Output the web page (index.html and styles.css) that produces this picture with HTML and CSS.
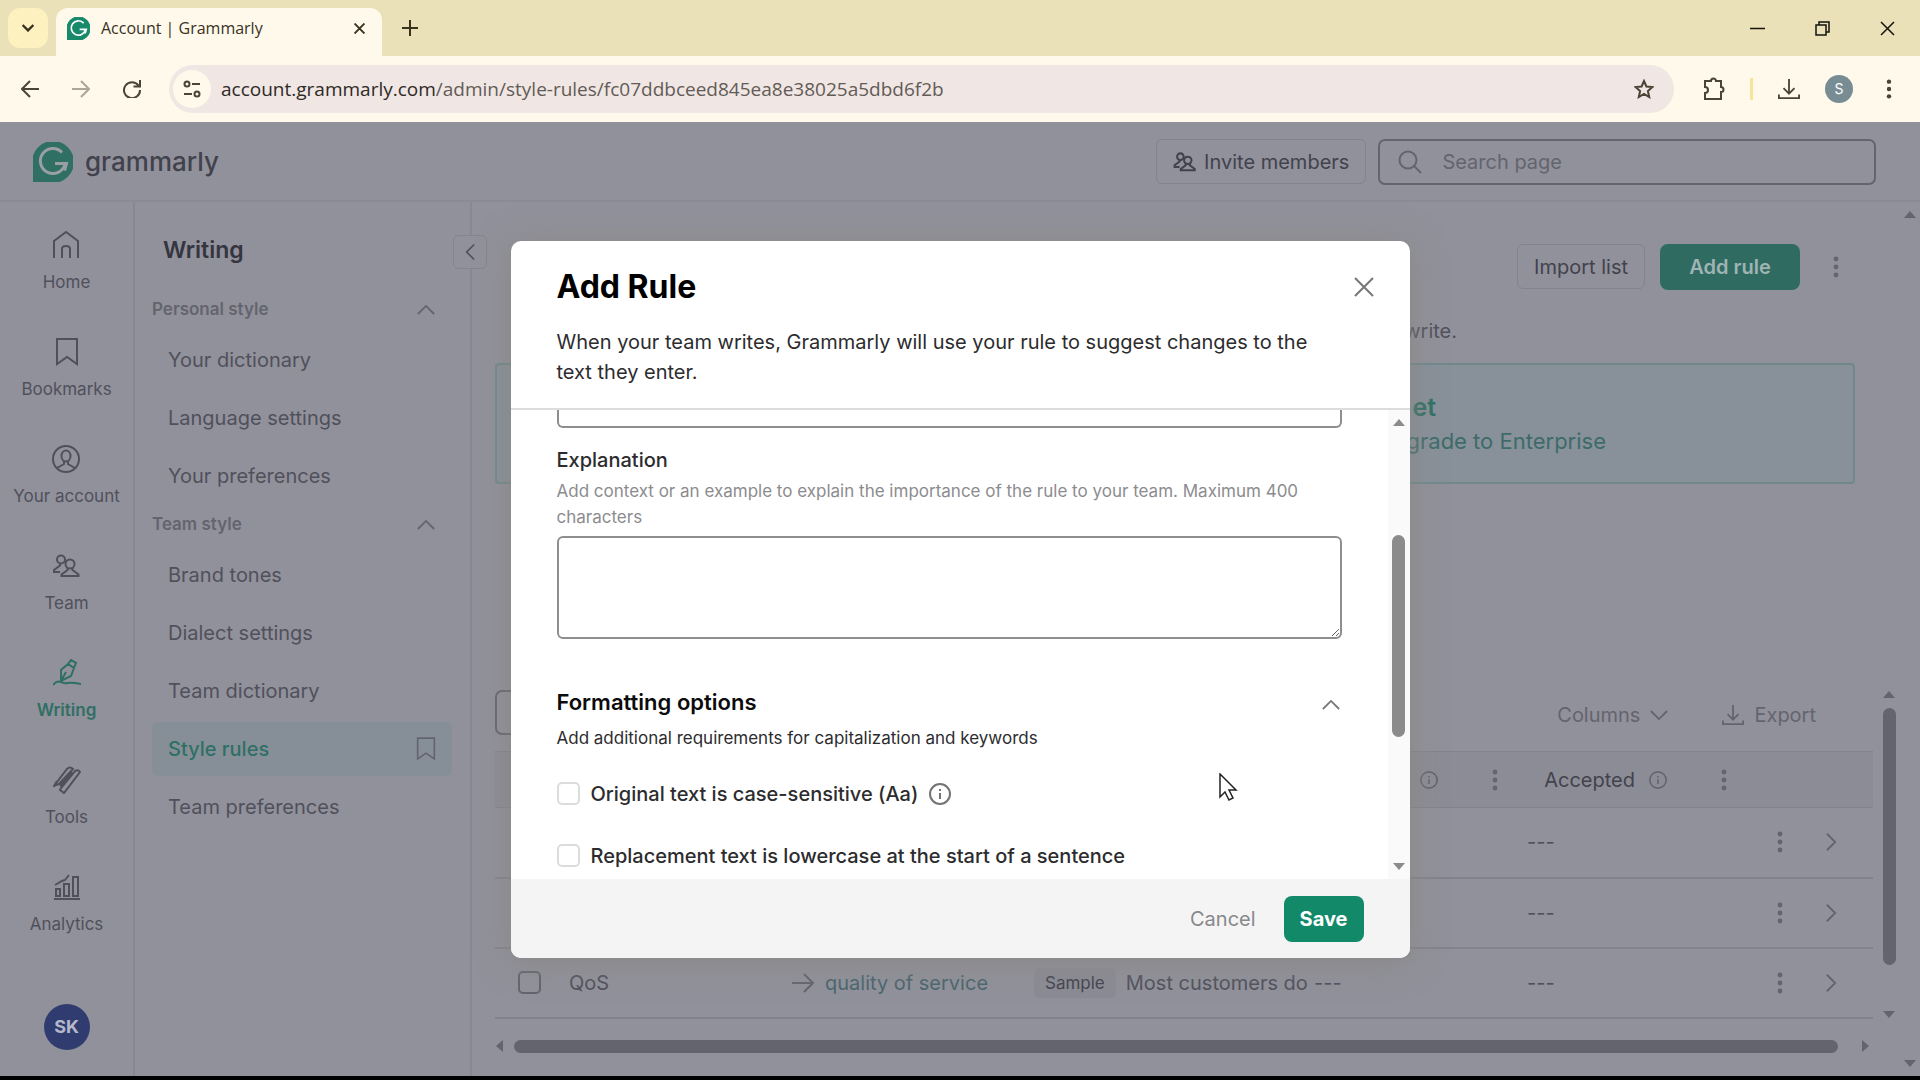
FILE: index.html
```
<!DOCTYPE html>
<html lang="en">
  <head>
    <meta charset="UTF-8" />
    <meta name="viewport" content="width=device-width, initial-scale=1.0" />
    <title>Account | Grammarly</title>
    <link rel="stylesheet" href="styles.css">
  </head>
  <body>
    <!-- Shared icons -->
    <svg class="sprite" aria-hidden="true">
      <symbol id="i-logo" viewBox="0 0 40 40">
        <path d="M20 0a20 20 0 1 1 0 40H0V20A20 20 0 0 1 20 0z" fill="currentColor"/>
        <path d="M29 10.500A12.5 12.5 0 1 0 32 22M22 21.500h11.500l-2 7" fill="none" stroke="var(--mark)" stroke-width="3"/>
      </symbol>
      <symbol id="i-up" viewBox="0 0 20 12"><path d="M1 11l9-9 9 9"/></symbol>
      <symbol id="i-down" viewBox="0 0 20 12"><path d="M1 1l9 9 9-9"/></symbol>
      <symbol id="i-right" viewBox="0 0 12 20"><path d="M1 1l9 9-9 9"/></symbol>
      <symbol id="i-left" viewBox="0 0 12 20"><path d="M11 1l-9 9 9 9"/></symbol>
      <symbol id="i-close" viewBox="0 0 20 20"><path d="M1 1l18 18M19 1L1 19"/></symbol>
      <symbol id="i-dots" viewBox="0 0 8 24"><g fill="currentColor" stroke="none"><circle cx="4" cy="4" r="2.400"/><circle cx="4" cy="12" r="2.400"/><circle cx="4" cy="20" r="2.400"/></g></symbol>
      <symbol id="i-info" viewBox="0 0 22 22"><circle cx="11" cy="11" r="10"/><path d="M11 10v6M11 6v2"/></symbol>
      <symbol id="i-bookmark" viewBox="0 0 24 28"><path d="M2 1h20v25l-10-7-10 7z"/></symbol>
      <symbol id="i-team" viewBox="0 0 28 24">
        <circle cx="9" cy="5.500" r="4"/><path d="M8 9.500v2l-6 4.500v2h6"/>
        <circle cx="18" cy="10" r="4.500"/><path d="M15.500 14v2l-6 4.500V22h17v-1.500l-6-4.500v-2"/>
      </symbol>
      <symbol id="i-download" viewBox="0 0 24 24"><path d="M12 1v15M6 11l6 6 6-6M1 18v4h22v-4"/></symbol>
      <symbol id="t-up" viewBox="0 0 12 8"><path d="M0 8l6-7 6 7z" fill="currentColor" stroke="none"/></symbol>
      <symbol id="t-down" viewBox="0 0 12 8"><path d="M0 0l6 7 6-7z" fill="currentColor" stroke="none"/></symbol>
      <symbol id="t-left" viewBox="0 0 8 12"><path d="M8 0L1 6l7 6z" fill="currentColor" stroke="none"/></symbol>
      <symbol id="t-right" viewBox="0 0 8 12"><path d="M0 0l7 6-7 6z" fill="currentColor" stroke="none"/></symbol>
    </svg>

    <div class="browser">
      <header class="tabstrip">
        <button class="tab-search" type="button" aria-label="Search tabs"><svg width="12" height="8" class="bold"><use href="#i-down"/></svg></button>
        <div class="tab">
          <svg class="favicon" width="23" height="23"><use href="#i-logo"/></svg>
          <span class="tab-title">Account | Grammarly</span>
          <button type="button" aria-label="Close tab"><svg width="11" height="11" class="bold"><use href="#i-close"/></svg></button>
        </div>
        <button class="new-tab" type="button" aria-label="New tab"><svg width="16" height="16" viewBox="0 0 16 16"><path d="M8 0v16M0 8h16"/></svg></button>
        <div class="window-controls">
          <button type="button" aria-label="Minimize"><svg width="15" height="15" viewBox="0 0 15 15"><path d="M0 7.500h15"/></svg></button>
          <button type="button" aria-label="Restore"><svg width="15" height="15" viewBox="0 0 15 15"><path d="M1 4h10v10H1zM4 4V1h10v10h-3"/></svg></button>
          <button type="button" aria-label="Close"><svg width="15" height="15" viewBox="0 0 15 15"><path d="M1 1l13 13M14 1L1 14"/></svg></button>
        </div>
      </header>

      <div class="toolbar">
        <div class="nav-buttons">
          <button type="button" aria-label="Back"><svg width="18" height="18" viewBox="0 0 18 18"><path d="M18 9H2M9 1L1 9l8 8"/></svg></button>
          <button type="button" aria-label="Forward" class="off"><svg width="18" height="18" viewBox="0 0 18 18"><path d="M0 9h16M9 1l8 8-8 8"/></svg></button>
          <button type="button" aria-label="Reload"><svg width="18" height="18" viewBox="0 0 18 18"><path d="M15.500 5.500A8 8 0 1 0 17 10M17 0v6.500h-6.500"/></svg></button>
        </div>
        <div class="address">
          <button class="site-info" type="button" aria-label="Site information">
            <svg width="18" height="18" viewBox="0 0 18 18"><circle cx="4" cy="4" r="2.500"/><path d="M9 4h8M1 14h8"/><circle cx="14" cy="14" r="2.500"/></svg>
          </button>
          <span class="url">account.grammarly.com<i>/admin/style-rules/fc07ddbceed845ea8e38025a5dbd6f2b</i></span>
          <button type="button" aria-label="Bookmark this tab"><svg width="20" height="20" viewBox="0 0 20 20"><path d="M10 2l2.400 5.500 6 .5-4.500 4 1.300 6-5.200-3.200L4.800 18l1.300-6-4.500-4 6-.5z"/></svg></button>
        </div>
        <div class="toolbar-right">
          <button type="button" aria-label="Extensions"><svg width="22" height="24" viewBox="0 0 22 24"><path d="M2 4h6a2.500 2.500 0 0 1 5 0h5v6a2.500 2.500 0 0 1 0 5v7H2v-6a3 3 0 0 0 0-6z"/></svg></button>
          <span class="divider"></span>
          <button type="button" aria-label="Downloads"><svg width="22" height="22"><use href="#i-download"/></svg></button>
          <span class="profile">S</span>
          <button type="button" aria-label="Menu"><svg width="8" height="22"><use href="#i-dots"/></svg></button>
        </div>
      </div>

      <div class="page">
        <header class="app-header">
          <a class="brand" href="#"><svg width="40" height="40"><use href="#i-logo"/></svg><span>grammarly</span></a>
          <button class="outline" type="button"><svg width="23" height="20" class="bold"><use href="#i-team"/></svg>Invite members</button>
          <label class="search">
            <svg width="24" height="24" viewBox="0 0 24 24"><circle cx="10" cy="10" r="8.500"/><path d="M16 16l7 7"/></svg>
            <input type="search" placeholder="Search page" aria-label="Search page">
          </label>
        </header>

        <div class="app-body">
          <nav class="rail">
            <a href="#"><svg width="28" height="28" viewBox="0 0 28 28"><path d="M2 27V10L14 1l12 9v17M10 27V18q0-3 4-3t4 3v9"/></svg>Home</a>
            <a href="#"><svg width="28" height="28"><use href="#i-bookmark"/></svg>Bookmarks</a>
            <a href="#"><svg width="28" height="28" viewBox="0 0 28 28"><circle cx="14" cy="14" r="13"/><ellipse cx="14" cy="11" rx="4.500" ry="5.500"/><path d="M12 16v3l-7 4M16 16v3l7 4"/></svg>Your account</a>
            <a href="#"><svg width="28" height="28"><use href="#i-team"/></svg>Team</a>
            <a href="#" class="current"><svg width="28" height="28" viewBox="0 0 28 28"><path d="M8 22l0-11 7-6 6 4-3 8zM8 22l5-9M15 5l3-4 5 3-2 5M0 26q4-5 8-3t7 1 13 1"/></svg>Writing</a>
            <a href="#"><svg width="28" height="28" viewBox="0 0 28 28"><path d="M1 20L14 3q3-3 6 0L6 18zM1 20l3-5M8 22L22 5q3-2 5 1L11 27l-4-3zM7 20L19 6"/></svg>Tools</a>
            <a href="#"><svg width="28" height="28" viewBox="0 0 28 28"><path d="M1 26h26M3 23v-7h4v7zM11 23V11h5v12zM20 23V4h5v19zM2 12l7-4 3-1 4-5"/></svg>Analytics</a>
            <span class="avatar">SK</span>
          </nav>

          <aside class="sidebar">
            <button class="collapse" type="button" aria-label="Collapse menu"><svg width="10" height="18"><use href="#i-left"/></svg></button>
            <h2>Writing</h2>
            <button class="group" type="button">Personal style<svg width="18" height="11"><use href="#i-up"/></svg></button>
            <ul>
              <li><a href="#">Your dictionary</a></li>
              <li><a href="#">Language settings</a></li>
              <li><a href="#">Your preferences</a></li>
            </ul>
            <button class="group" type="button">Team style<svg width="18" height="11"><use href="#i-up"/></svg></button>
            <ul>
              <li><a href="#">Brand tones</a></li>
              <li><a href="#">Dialect settings</a></li>
              <li><a href="#">Team dictionary</a></li>
              <li><a href="#" class="current">Style rules<svg width="20" height="24"><use href="#i-bookmark"/></svg></a></li>
              <li><a href="#">Team preferences</a></li>
            </ul>
          </aside>

          <main class="main">
            <div class="content">
              <div class="page-actions">
                <button class="outline" type="button">Import list</button>
                <button class="primary" type="button">Add rule</button>
                <button type="button" aria-label="More"><svg width="8" height="24"><use href="#i-dots"/></svg></button>
              </div>
              <p class="intro">write.</p>
              <section class="banner">
                <h3>et</h3>
                <p>Upgrade to Enterprise</p>
              </section>

              <section class="rules">
                <div class="rules-main">
                  <div class="rules-bar">
                    <input class="filter" type="search" aria-label="Search rules">
                    <button type="button">Columns<svg width="18" height="11"><use href="#i-down"/></svg></button>
                    <button type="button"><svg width="22" height="22"><use href="#i-download"/></svg>Export</button>
                  </div>
                  <table>
                    <colgroup>
                      <col class="c-check"><col class="c-original"><col class="c-replace"><col><col class="c-used"><col class="c-accepted"><col class="c-more"><col class="c-open">
                    </colgroup>
                    <thead>
                      <tr>
                        <th></th><th></th><th></th><th></th>
                        <th><div class="th"><svg width="18" height="18"><use href="#i-info"/></svg><svg width="8" height="24"><use href="#i-dots"/></svg></div></th>
                        <th><div class="th"><span>Accepted</span><svg width="18" height="18"><use href="#i-info"/></svg><svg width="8" height="24"><use href="#i-dots"/></svg></div></th>
                        <th></th><th></th>
                      </tr>
                    </thead>
                    <tbody>
                      <tr>
                        <td></td><td></td><td></td><td></td><td></td><td>---</td>
                        <td><button type="button" aria-label="More"><svg width="8" height="24"><use href="#i-dots"/></svg></button></td>
                        <td><button type="button" aria-label="Open"><svg width="11" height="20"><use href="#i-right"/></svg></button></td>
                      </tr>
                      <tr>
                        <td></td><td></td><td></td><td></td><td></td><td>---</td>
                        <td><button type="button" aria-label="More"><svg width="8" height="24"><use href="#i-dots"/></svg></button></td>
                        <td><button type="button" aria-label="Open"><svg width="11" height="20"><use href="#i-right"/></svg></button></td>
                      </tr>
                      <tr>
                        <td class="pick"><input type="checkbox" aria-label="Select QoS"></td>
                        <td>QoS</td>
                        <td><div class="replace"><svg width="23" height="20" viewBox="0 0 23 20"><path d="M0 10h21M12 1l9 9-9 9"/></svg>quality of service</div></td>
                        <td><div class="sample"><span class="tag">Sample</span><span class="clip">Most customers don</span></div></td>
                        <td>---</td><td>---</td>
                        <td><button type="button" aria-label="More"><svg width="8" height="24"><use href="#i-dots"/></svg></button></td>
                        <td><button type="button" aria-label="Open"><svg width="11" height="20"><use href="#i-right"/></svg></button></td>
                      </tr>
                    </tbody>
                  </table>
                </div>
                <div class="vscroll">
                  <svg width="12" height="8"><use href="#t-up"/></svg>
                  <div class="track"><div class="thumb"></div></div>
                  <svg width="12" height="8"><use href="#t-down"/></svg>
                </div>
              </section>
              <div class="hscroll">
                <svg width="8" height="12"><use href="#t-left"/></svg>
                <div class="track"><div class="thumb"></div></div>
                <svg width="8" height="12"><use href="#t-right"/></svg>
              </div>
            </div>
            <div class="page-scroll">
              <svg width="12" height="8"><use href="#t-up"/></svg>
              <svg width="12" height="8"><use href="#t-down"/></svg>
            </div>
          </main>
        </div>

        <div class="overlay">
          <form class="modal" role="dialog" aria-labelledby="modal-title">
            <header class="modal-head">
              <div class="modal-title">
                <h1 id="modal-title">Add Rule</h1>
                <button type="button" aria-label="Close"><svg width="20" height="20"><use href="#i-close"/></svg></button>
              </div>
              <p>When your team writes, Grammarly will use your rule to suggest changes to the text they enter.</p>
            </header>
            <div class="modal-scroll">
              <div class="modal-body">
                <input class="cut-field" type="text" aria-label="Replacement text">
                <label class="field-label" for="explanation">Explanation</label>
                <p class="help">Add context or an example to explain the importance of the rule to your team. Maximum 400 characters</p>
                <textarea id="explanation"></textarea>
                <div class="section-head">
                  <h2>Formatting options</h2>
                  <button type="button" aria-label="Collapse"><svg width="18" height="11"><use href="#i-up"/></svg></button>
                </div>
                <p class="section-sub">Add additional requirements for capitalization and keywords</p>
                <div class="option">
                  <input type="checkbox" id="case"><label for="case">Original text is case-sensitive (Aa)</label>
                  <svg width="22" height="22"><use href="#i-info"/></svg>
                </div>
                <div class="option">
                  <input type="checkbox" id="lower"><label for="lower">Replacement text is lowercase at the start of a sentence</label>
                </div>
              </div>
              <div class="modal-bar">
                <svg width="12" height="8"><use href="#t-up"/></svg>
                <div class="track"><div class="thumb"></div></div>
                <svg width="12" height="8"><use href="#t-down"/></svg>
              </div>
            </div>
            <footer class="modal-foot">
              <button class="cancel" type="button">Cancel</button>
              <button class="save" type="submit">Save</button>
            </footer>
          </form>
        </div>
      </div>
    </div>
    <svg class="cursor" width="19" height="28" viewBox="0 0 19 28"><path d="M1 1v23l5-5 4 8 4-2-4-8h7z"/></svg>
  </body>
</html>
```
FILE: styles.css
```
:root {
  --chrome: #ebe1b9;
  --toolbar: #fff9ec;
  --page: #91919b;
  --line: #83838d;
  --ink: #42424d;
  --text: #50505b;
  --muted: #64646f;
  --green: #2f6f64;
  --thumb: #64646e;
  --mark: #9a9fa5;
}

* {
  margin: 0;
  padding: 0;
  box-sizing: border-box;
}

body {
  min-height: 100vh;
  background: #000;
  font-family: Inter, "Liberation Sans", sans-serif;
  font-size: 20px;
  line-height: 30px;
  color: var(--text);
}

button,
input,
textarea {
  font: inherit;
  color: inherit;
}

button {
  background: none;
  border: none;
  cursor: pointer;
  display: flex;
  align-items: center;
  justify-content: center;
}

a {
  color: inherit;
  text-decoration: none;
}

ul {
  list-style: none;
}

svg {
  flex: none;
  display: block;
  fill: none;
  stroke: currentColor;
  stroke-width: 2;
}

svg.bold {
  stroke-width: 2.500;
}

.sprite {
  position: absolute;
  width: 0;
  height: 0;
}

.browser {
  min-height: 100vh;
  display: flex;
  flex-direction: column;
  border-bottom: 4px solid #000;
}

/* Browser chrome */
.tabstrip {
  height: 56px;
  padding: 8px 0 0 8px;
  display: flex;
  background: var(--chrome);
  color: #38321f;
  font-family: "Open Sans", "Noto Sans", sans-serif;
}

.tab-search {
  width: 40px;
  height: 40px;
  border-radius: 12px;
  background: #fdf1c0;
}

.tab-search svg {
  stroke-width: 4;
}

.tab {
  width: 326px;
  margin-left: 8px;
  padding: 0 17px 8px 11px;
  display: flex;
  align-items: center;
  gap: 11px;
  border-radius: 12px 12px 0 0;
  background: var(--toolbar);
}

.tab svg.bold {
  stroke-width: 3.500;
}

.favicon {
  color: #168a6a;
  --mark: #fff;
}

.tab-title {
  flex: 1;
  font-size: 16px;
}

.new-tab {
  width: 40px;
  height: 40px;
  margin-left: 8px;
}

.window-controls {
  margin-left: auto;
  display: flex;
  height: 40px;
  color: #15130c;
}

.window-controls svg {
  stroke-width: 1.500;
}

.window-controls button {
  width: 65px;
}

.toolbar {
  height: 66px;
  padding: 0 27px 0 12px;
  display: flex;
  align-items: center;
  background: var(--toolbar);
  color: #4a4336;
}

.nav-buttons {
  display: flex;
  gap: 16px;
}

.nav-buttons button {
  width: 35px;
  height: 40px;
}

.off {
  opacity: 0.45;
}

.address {
  flex: 1;
  height: 48px;
  margin-left: 20px;
  padding: 0 20px 0 4px;
  display: flex;
  align-items: center;
  gap: 10px;
  border-radius: 24px;
  background: #f0e6e3;
}

.site-info {
  width: 38px;
  height: 38px;
  border-radius: 50%;
  background: var(--toolbar);
}

.url {
  flex: 1;
  font-family: "Open Sans", "Noto Sans", sans-serif;
  font-size: 19px;
  color: #2e2a26;
}

.url i {
  font-style: normal;
  color: #625b57;
}

.toolbar-right {
  margin-left: 29px;
  display: flex;
  align-items: center;
  gap: 25px;
}

.divider {
  width: 3px;
  height: 22px;
  background: #f5e49b;
}

.profile {
  width: 28px;
  height: 28px;
  border-radius: 50%;
  background: #788c94;
  color: #fff;
  font-size: 14px;
  line-height: 28px;
  text-align: center;
}

.toolbar-right button:last-child {
  margin-left: 7px;
}

/* App shell */
.page {
  flex: 1;
  position: relative;
  display: flex;
  flex-direction: column;
  background: var(--page);
}

.app-header {
  height: 80px;
  padding: 1px 44px 0 33px;
  display: flex;
  align-items: center;
  gap: 12px;
  border-bottom: 2px solid #8a8a94;
}

.brand {
  margin-right: auto;
  display: flex;
  align-items: center;
  gap: 12px;
  color: var(--green);
}

.brand span {
  color: var(--ink);
  font-size: 26px;
  font-weight: 500;
}

.outline {
  height: 45px;
  padding: 0 16px;
  gap: 8px;
  border: 1px solid var(--line);
  border-radius: 6px;
  color: var(--ink);
}

.search {
  width: 27%;
  height: 46px;
  padding: 0 18px;
  display: flex;
  align-items: center;
  gap: 20px;
  border: 2px solid var(--muted);
  border-radius: 7px;
  color: var(--muted);
}

.search input {
  flex: 1;
  min-width: 0;
  background: none;
  border: none;
}

.search input::placeholder {
  color: var(--muted);
}

.app-body {
  flex: 1;
  display: flex;
}

.rail {
  width: 135px;
  padding-top: 29px;
  display: flex;
  flex-direction: column;
  align-items: center;
  border-right: 2px solid #888892;
  font-size: 17px;
}

.rail a {
  height: 107px;
  display: flex;
  flex-direction: column;
  align-items: center;
  gap: 8px;
}

.rail a.current {
  color: var(--green);
  font-weight: 600;
}

.avatar {
  width: 46px;
  height: 46px;
  margin-top: 24px;
  border-radius: 50%;
  background: #303c70;
  color: #b5b8ca;
  font-size: 18px;
  font-weight: 700;
  line-height: 46px;
  text-align: center;
}

.sidebar {
  position: relative;
  width: 337px;
  padding: 33px 18px 0 17px;
  border-right: 2px solid #888892;
}

.sidebar h2 {
  padding-left: 11px;
  color: #353540;
  font-size: 23px;
  font-weight: 600;
}

/* Sits on the sidebar's right edge */
.collapse {
  position: absolute;
  top: 33px;
  right: -17px;
  width: 34px;
  height: 34px;
  border: 1px solid #85858f;
  border-radius: 5px;
  background: var(--page);
}

.group {
  width: 100%;
  margin-top: 29px;
  padding-right: 17px;
  justify-content: space-between;
  color: var(--muted);
  font-size: 17px;
  font-weight: 600;
}

.sidebar ul {
  padding-top: 9px;
}

.sidebar ul + .group {
  margin-top: 6px;
}

.sidebar ul a {
  height: 54px;
  margin-bottom: 4px;
  padding: 0 16px;
  display: flex;
  align-items: center;
  justify-content: space-between;
  border-radius: 6px;
}

.sidebar ul a.current {
  background: #868f98;
  color: var(--green);
  font-weight: 500;
}

.sidebar ul a svg {
  color: var(--muted);
}

.main {
  flex: 1;
  min-width: 0;
  display: flex;
}

.content {
  flex: 1;
  min-width: 0;
  padding: 42px 0 18px 23px;
}

.page-actions {
  padding-right: 43px;
  display: flex;
  justify-content: flex-end;
  gap: 15px;
}

.page-actions button:last-child {
  width: 42px;
}

.primary {
  width: 140px;
  height: 46px;
  border-radius: 8px;
  background: #306b62;
  color: #9fb4b3;
  font-weight: 600;
}

.intro {
  margin-top: 26px;
  padding-right: 443px;
  text-align: right;
}

.banner {
  height: 121px;
  margin: 17px 45px 0 0;
  padding: 25px 247px 0 0;
  border: 2px solid #70888c;
  border-radius: 4px;
  background: #88919a;
  color: #3d6b69;
  text-align: right;
  font-size: 22px;
  line-height: 34px;
}

.banner h3 {
  padding-right: 170px;
  color: var(--green);
  font-size: 25px;
  line-height: 34px;
  font-weight: 600;
}

.rules {
  margin-top: 206px;
  display: flex;
  gap: 7px;
}

.rules-main {
  flex: 1;
  min-width: 0;
}

.rules-bar {
  height: 61px;
  padding-right: 57px;
  display: flex;
  align-items: flex-start;
  gap: 54px;
  color: var(--muted);
}

.rules-bar button {
  height: 50px;
  gap: 10px;
}

.filter {
  width: 480px;
  height: 45px;
  margin-right: auto;
  border: 2px solid var(--muted);
  border-radius: 7px;
  background: none;
}

table {
  width: 100%;
  table-layout: fixed;
  border-collapse: collapse;
}

.c-check { width: 68px; }
.c-original { width: 223px; }
.c-replace { width: 242px; }
.c-used { width: 213px; }
.c-accepted { width: 229px; }
.c-more { width: 51px; }
.c-open { width: 72px; }

th {
  height: 56px;
  background: #8c8c96;
  border-top: 1px solid var(--line);
  border-bottom: 1px solid var(--line);
  font-weight: 400;
  color: var(--ink);
}

.th {
  padding-right: 22px;
  display: flex;
  align-items: center;
  justify-content: flex-end;
  gap: 53px;
}

.th span {
  margin-right: -39px;
}

.th svg {
  color: var(--muted);
}

td {
  height: 70px;
  padding-left: 6px;
  border-bottom: 2px solid var(--line);
}

td button,
.page-actions button:last-child {
  color: var(--muted);
}

td button {
  width: 48px;
  height: 40px;
}

td.pick {
  padding-left: 23px;
}

input[type="checkbox"] {
  appearance: none;
  display: block;
  width: 23px;
  height: 23px;
  border: 2px solid var(--muted);
  border-radius: 5px;
}

.replace,
.sample {
  display: flex;
  align-items: center;
  gap: 10px;
  white-space: nowrap;
}

.replace {
  color: #49656d;
}

.replace svg {
  color: var(--muted);
}

.tag {
  padding: 0 11px;
  border-radius: 5px;
  background: #8b8b95;
  color: var(--ink);
  font-size: 17px;
}

.clip {
  overflow: hidden;
}

.vscroll {
  width: 18px;
  margin-right: 2px;
  display: flex;
  flex-direction: column;
  align-items: center;
  gap: 10px;
  color: var(--thumb);
}

.track {
  flex: 1;
}

.thumb {
  width: 13px;
  height: 88%;
  border-radius: 7px;
  background: var(--thumb);
}

.hscroll {
  margin-top: 21px;
  padding-right: 30px;
  display: flex;
  align-items: center;
  gap: 11px;
  color: var(--thumb);
}

.hscroll .thumb {
  width: 99%;
  height: 13px;
}

.page-scroll {
  width: 20px;
  padding: 8px 0;
  display: flex;
  flex-direction: column;
  align-items: center;
  justify-content: space-between;
  color: var(--thumb);
}

/* Dialog */
.overlay {
  position: absolute;
  inset: 0;
  display: flex;
  align-items: center;
  justify-content: center;
}

.modal {
  width: 90%;
  max-width: 899px;
  overflow: hidden;
  border-radius: 10px;
  background: #fff;
  color: #2c2c2e;
  box-shadow: 0 4px 30px 4px rgba(135, 135, 130, 0.7);
}

.modal-head {
  padding: 26px 36px 21px 46px;
  border-bottom: 2px solid #dcdcde;
}

.modal-title {
  display: flex;
  align-items: center;
  justify-content: space-between;
  color: #77777a;
}

.modal-title h1 {
  color: #000;
  font-size: 32px;
  line-height: 40px;
  font-weight: 700;
}

.modal-head p {
  margin-top: 20px;
  padding-right: 50px;
}

.modal-scroll {
  display: flex;
}

.modal-body {
  flex: 1;
  padding: 0 46px 8px;
}

.cut-field {
  display: block;
  width: 100%;
  height: 18px;
  border: 2px solid #8e8e91;
  border-top: none;
  border-radius: 0 0 6px 6px;
}

.field-label {
  display: block;
  margin-top: 17px;
  font-weight: 500;
}

.help {
  margin-top: 3px;
  color: #8c8c8f;
  font-size: 17px;
  line-height: 26px;
}

textarea {
  display: block;
  width: 100%;
  height: 103px;
  margin-top: 6px;
  padding: 10px;
  border: 2px solid #8e8e91;
  border-radius: 6px;
  background: #fff;
}

.section-head {
  margin-top: 48px;
  display: flex;
  align-items: center;
  justify-content: space-between;
  color: #77777a;
}

.section-head h2 {
  color: #0c0c0d;
  font-size: 22px;
  line-height: 30px;
  font-weight: 600;
}

.section-head button {
  padding: 6px 2px 0;
}

.section-sub {
  margin-top: 6px;
  font-size: 17px;
}

.option {
  margin-top: 26px;
  display: flex;
  align-items: center;
  gap: 11px;
  font-weight: 500;
}

.option + .option {
  margin-top: 32px;
}

.option svg {
  color: #737376;
}

.option input[type="checkbox"] {
  border-color: #dcdcde;
}

.modal-bar {
  width: 22px;
  padding: 8px 0;
  display: flex;
  flex-direction: column;
  align-items: center;
  gap: 8px;
  background: #fafafa;
  color: #8b8b8b;
}

.modal-bar .track {
  display: flex;
  flex-direction: column;
}

/* Scrolled a bit under a quarter of the way down */
.modal-bar .track::before {
  content: "";
  height: 24%;
}

.modal-bar .thumb {
  height: 48%;
  background: #8b8b8b;
}

.modal-foot {
  padding: 17px 46px 16px;
  display: flex;
  align-items: center;
  justify-content: flex-end;
  gap: 28px;
  background: #f4f4f5;
}

.cancel {
  color: #88888b;
}

.save {
  height: 46px;
  padding: 0 16px;
  border-radius: 8px;
  background: #128a6a;
  color: #fff;
  font-weight: 700;
}

/* Mouse pointer over the dialog */
.cursor {
  position: absolute;
  left: 1219px;
  top: 773px;
  fill: #fff;
  stroke: #222;
  stroke-width: 1.500;
}
```
